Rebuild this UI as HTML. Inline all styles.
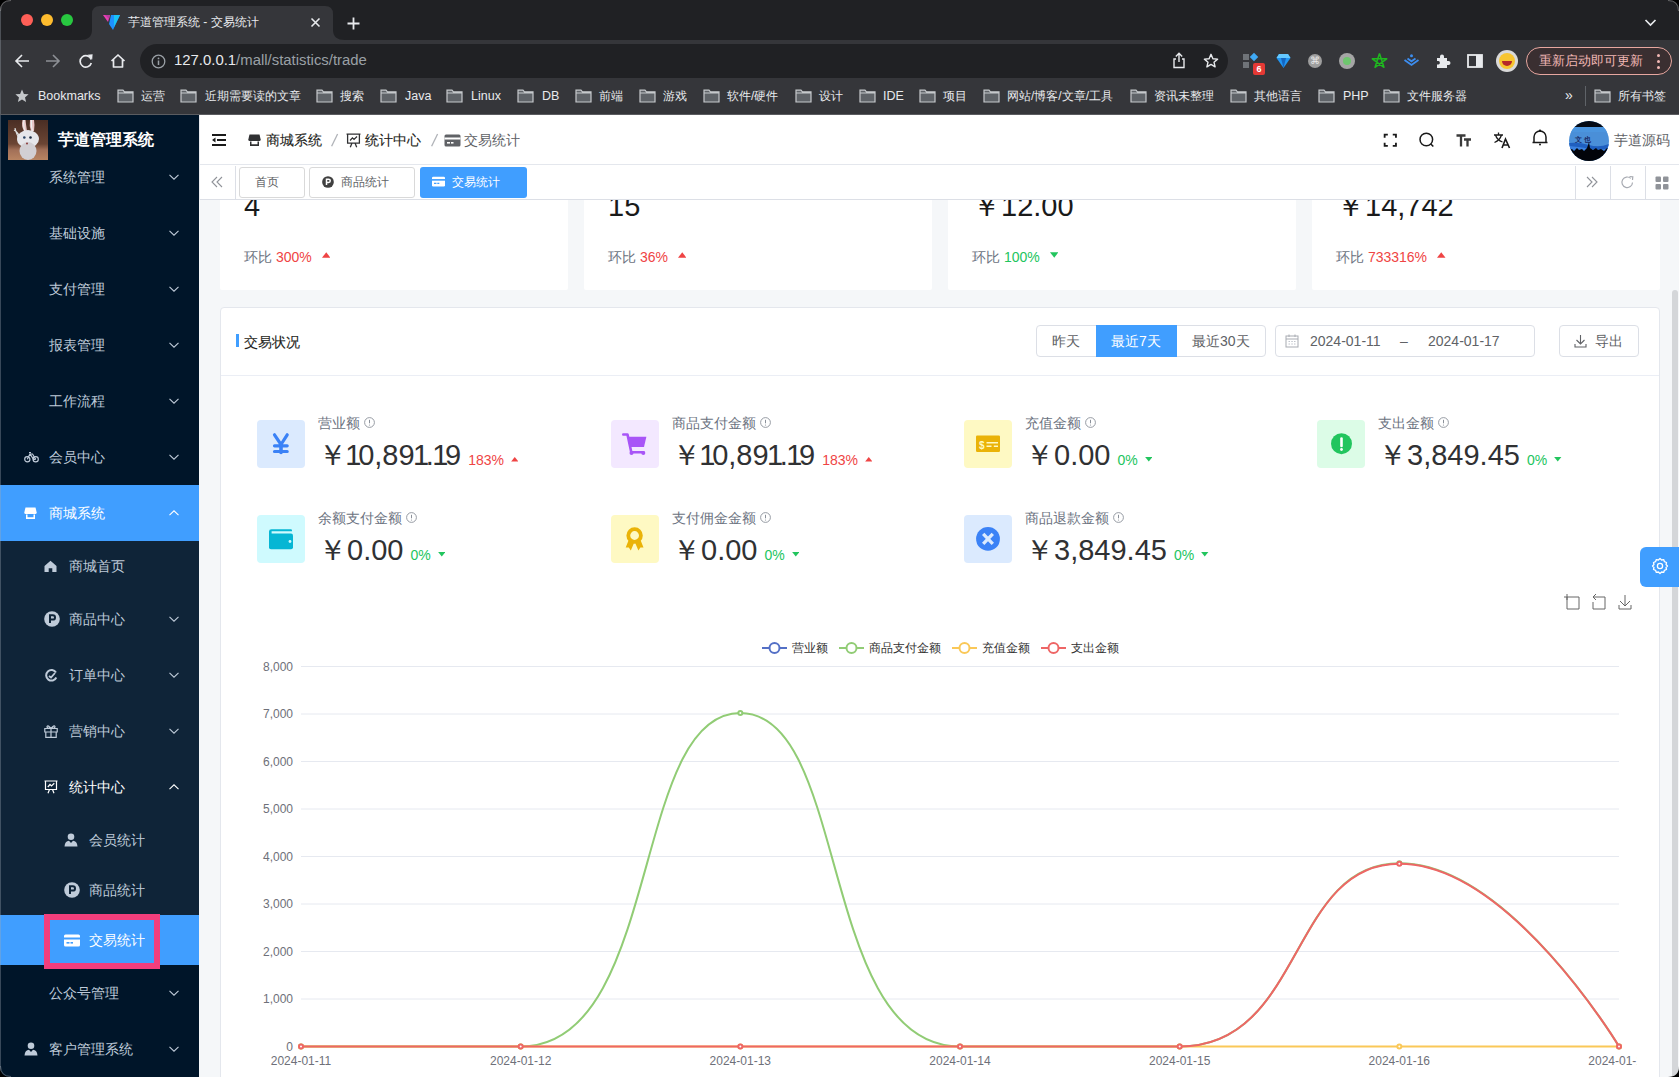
<!DOCTYPE html>
<html><head><meta charset="utf-8">
<style>
*{box-sizing:border-box;margin:0;padding:0}
html,body{width:1679px;height:1077px;overflow:hidden;background:#202124;font-family:"Liberation Sans",sans-serif}
.a{position:absolute}
.t{position:absolute;white-space:nowrap}
svg{display:block}
/* chrome */
#tabbar{left:0;top:0;width:1679px;height:40px;background:#202124}
#toolbar{left:0;top:40px;width:1679px;height:38px;background:#35363a}
#bmbar{left:0;top:78px;width:1679px;height:37px;background:#35363a}
/* app */
#side{left:0;top:115px;width:199px;height:962px;background:#001529;overflow:hidden}
#header{left:199px;top:115px;width:1480px;height:50px;background:#fff;border-bottom:1px solid #e4e7ed}
#tags{left:199px;top:165px;width:1480px;height:35px;background:#fff;border-bottom:1px solid #dcdfe6}
#content{left:199px;top:200px;width:1480px;height:877px;background:#f5f7f9;overflow:hidden}
</style></head><body>
<div id="tabbar" class="a">
  <div class="a" style="left:21px;top:13.5px;width:12px;height:12px;border-radius:50%;background:#fe5f57"></div>
  <div class="a" style="left:41px;top:13.5px;width:12px;height:12px;border-radius:50%;background:#febc2e"></div>
  <div class="a" style="left:61px;top:13.5px;width:12px;height:12px;border-radius:50%;background:#28c840"></div>
  <svg class="a" style="left:80px;top:5px" width="266" height="35" viewBox="0 0 266 35"><path d="M0 35 Q12 35 12 25 L12 9 Q12 1 20 1 L245 1 Q253 1 253 9 L253 25 Q253 35 265 35 Z" fill="#35363a"/></svg>
  <svg class="a" style="left:103px;top:14px" width="18" height="17" viewBox="0 0 18 17"><path d="M0 1 L7 1 L5 8 Z" fill="#e83fb4"/><path d="M2 1 L7 1 L6 5 Z" fill="#b93a9f"/><path d="M8 1 L17 1 L10 16 L6 10 Z" fill="#1e90ff"/><path d="M11 1 L17 1 L11 13 Z" fill="#19c3f5"/></svg>
  <div class="t" style="left:128px;top:14px;font-size:12px;line-height:16px;color:#e8eaed">芋道管理系统 - 交易统计</div>
  <svg class="a" style="left:310px;top:17px" width="11" height="11" viewBox="0 0 11 11"><path d="M1.5 1.5 L9.5 9.5 M9.5 1.5 L1.5 9.5" stroke="#e8eaed" stroke-width="1.6"/></svg>
  <svg class="a" style="left:346px;top:16px" width="15" height="15" viewBox="0 0 15 15"><path d="M7.5 1.5 V13.5 M1.5 7.5 H13.5" stroke="#e8eaed" stroke-width="1.8"/></svg>
  <svg class="a" style="left:1644px;top:17px" width="13" height="11" viewBox="0 0 13 11"><path d="M1.5 3 L6.5 8 L11.5 3" stroke="#e8eaed" stroke-width="1.7" fill="none"/></svg>
</div>
<div id="toolbar" class="a">
  <svg class="a" style="left:14px;top:13px" width="16" height="16" viewBox="0 0 16 16"><path d="M15 8 H2 M8 2 L2 8 L8 14" stroke="#e8eaed" stroke-width="1.6" fill="none"/></svg>
  <svg class="a" style="left:45px;top:13px" width="16" height="16" viewBox="0 0 16 16"><path d="M1 8 H14 M8 2 L14 8 L8 14" stroke="#8d9095" stroke-width="1.6" fill="none"/></svg>
  <svg class="a" style="left:78px;top:13px" width="16" height="16" viewBox="0 0 16 16"><path d="M13.2 6.5 A5.7 5.7 0 1 0 13.3 10" stroke="#e8eaed" stroke-width="1.7" fill="none"/><path d="M9.5 1.8 L14.6 1.3 L14.2 6.6 Z" fill="#e8eaed"/></svg>
  <svg class="a" style="left:110px;top:13px" width="16" height="16" viewBox="0 0 16 16"><path d="M1.5 8 L8 2 L14.5 8 M3.5 6.5 V14 H12.5 V6.5" stroke="#e8eaed" stroke-width="1.7" fill="none" stroke-linejoin="round"/></svg>
  <div class="a" style="left:140px;top:4px;width:1088px;height:34px;border-radius:17px;background:#202124"></div>
  <svg class="a" style="left:151px;top:14px" width="15" height="15" viewBox="0 0 15 15"><circle cx="7.5" cy="7.5" r="6.3" stroke="#9aa0a6" stroke-width="1.3" fill="none"/><path d="M7.5 6.5 V11" stroke="#9aa0a6" stroke-width="1.5"/><circle cx="7.5" cy="4.4" r="0.9" fill="#9aa0a6"/></svg>
  <div class="t" style="left:174px;top:11px;font-size:14.9px;line-height:18px;color:#e8eaed">127.0.0.1<span style="color:#9aa0a6">/mall/statistics/trade</span></div>
  <svg class="a" style="left:1171px;top:12px" width="16" height="17" viewBox="0 0 16 17"><path d="M8 1.5 V10 M4.8 4.5 L8 1.3 L11.2 4.5 M5 7 H3 V15.5 H13 V7 H11" stroke="#e8eaed" stroke-width="1.4" fill="none"/></svg>
  <svg class="a" style="left:1203px;top:13px" width="16" height="16" viewBox="0 0 16 16"><path d="M8 1.3 L9.9 5.7 L14.6 6.1 L11 9.2 L12.1 13.9 L8 11.4 L3.9 13.9 L5 9.2 L1.4 6.1 L6.1 5.7 Z" stroke="#e8eaed" stroke-width="1.4" fill="none" stroke-linejoin="round"/></svg>
  <!-- extensions -->
  <div class="a" style="left:1243px;top:14px;width:6px;height:6px;background:#6f7378"></div>
  <div class="a" style="left:1243px;top:22px;width:6px;height:6px;background:#6f7378"></div>
  <div class="a" style="left:1251px;top:14px;width:6px;height:6px;background:#3fa9f5;transform:rotate(45deg)"></div>
  <div class="a" style="left:1253px;top:23px;width:12px;height:12px;border-radius:2px;background:#e53935;color:#fff;font-size:9px;line-height:12px;text-align:center;font-weight:bold">6</div>
  <svg class="a" style="left:1276px;top:13px" width="15" height="16" viewBox="0 0 15 16"><path d="M3 1 H12 L14.5 5 L7.5 15 L0.5 5 Z" fill="#2196f3"/><path d="M3 1 H12 L14.5 5 H0.5 Z" fill="#64c8ff"/><path d="M5 5 L7.5 15 L10 5Z" fill="#1565c0"/></svg>
  <div class="a" style="left:1308px;top:14px;width:14px;height:14px;border-radius:50%;background:#9e9e9e;color:#e8e8e8;font-size:10px;line-height:14px;text-align:center">⌘</div>
  <div class="a" style="left:1339px;top:13px;width:16px;height:16px;border-radius:50%;background:#a5a5a5"></div>
  <div class="a" style="left:1343px;top:17px;width:8px;height:8px;border-radius:50%;background:#6ec66e"></div>
  <svg class="a" style="left:1371px;top:12px" width="17" height="17" viewBox="0 0 17 17"><path d="M8.50 1.60 L12.97 15.35 L1.27 6.85 L15.73 6.85 L4.03 15.35 L8.50 1.60" stroke="#1fb81f" stroke-width="1.5" fill="none" stroke-linejoin="round"/></svg>
  <svg class="a" style="left:1403px;top:13px" width="17" height="16" viewBox="0 0 17 16"><path d="M1.5 7 L8.5 12 L15.5 7 M4.5 5.5 L8.5 8.3 L12.5 5.5" stroke="#3d8ef0" stroke-width="1.8" fill="none"/><circle cx="8.5" cy="2.8" r="1.5" fill="#3d8ef0"/></svg>
  <svg class="a" style="left:1435px;top:13px" width="16" height="16" viewBox="0 0 16 16"><path d="M2 5 H5 V3.5 A2 2 0 0 1 9 3.5 V5 H12 V8 H13.5 A2 2 0 0 1 13.5 12 H12 V15 H2 V11.5 H3.5 A1.8 1.8 0 0 0 3.5 8 H2 Z" fill="#e8eaed"/></svg>
  <svg class="a" style="left:1467px;top:14px" width="16" height="14" viewBox="0 0 16 14"><rect x="1" y="1" width="14" height="12" stroke="#e8eaed" stroke-width="1.8" fill="none"/><rect x="9" y="1" width="6" height="12" fill="#e8eaed"/></svg>
  <div class="a" style="left:1496px;top:10px;width:22px;height:22px;border-radius:50%;background:#d9d9d9"></div>
  <div class="a" style="left:1499px;top:13px;width:16px;height:16px;border-radius:50%;background:#f7c531"></div>
  <div class="a" style="left:1502px;top:21px;width:10px;height:5px;border-radius:0 0 5px 5px;background:#b5282a"></div>
  <div class="a" style="left:1526px;top:7px;width:146px;height:28px;border-radius:14px;border:1.5px solid #e7a7a0;background:#3a2f31"></div>
  <div class="t" style="left:1539px;top:13px;font-size:13px;line-height:16px;color:#f2b8b5">重新启动即可更新</div>
  <div class="a" style="left:1657px;top:14px;width:3px;height:3px;border-radius:50%;background:#f2b8b5"></div>
  <div class="a" style="left:1657px;top:20px;width:3px;height:3px;border-radius:50%;background:#f2b8b5"></div>
  <div class="a" style="left:1657px;top:26px;width:3px;height:3px;border-radius:50%;background:#f2b8b5"></div>
</div>
<div id="bmbar" class="a">
<svg class="a" style="left:15px;top:11px" width="14" height="14" viewBox="0 0 14 14"><path d="M7 0.5 L8.9 4.9 L13.6 5.3 L10 8.4 L11.1 13 L7 10.6 L2.9 13 L4 8.4 L0.4 5.3 L5.1 4.9 Z" fill="#c4c7ca"/></svg>
<div class="t" style="left:38px;top:10px;font-size:12.5px;line-height:16px;color:#e8eaed">Bookmarks</div>
<svg class="a" style="left:117px;top:11px" width="17" height="14" viewBox="0 0 17 14"><path d="M1 1.2 H6 L7.5 2.8 H16 V13 H1 Z M1 4 H16" stroke="#c6c9cc" stroke-width="1.2" fill="#5f6368" /></svg>
<div class="t" style="left:141px;top:10px;font-size:12px;line-height:16px;color:#e8eaed">运营</div>
<svg class="a" style="left:180px;top:11px" width="17" height="14" viewBox="0 0 17 14"><path d="M1 1.2 H6 L7.5 2.8 H16 V13 H1 Z M1 4 H16" stroke="#c6c9cc" stroke-width="1.2" fill="#5f6368" /></svg>
<div class="t" style="left:205px;top:10px;font-size:12px;line-height:16px;color:#e8eaed">近期需要读的文章</div>
<svg class="a" style="left:316px;top:11px" width="17" height="14" viewBox="0 0 17 14"><path d="M1 1.2 H6 L7.5 2.8 H16 V13 H1 Z M1 4 H16" stroke="#c6c9cc" stroke-width="1.2" fill="#5f6368" /></svg>
<div class="t" style="left:340px;top:10px;font-size:12px;line-height:16px;color:#e8eaed">搜索</div>
<svg class="a" style="left:380px;top:11px" width="17" height="14" viewBox="0 0 17 14"><path d="M1 1.2 H6 L7.5 2.8 H16 V13 H1 Z M1 4 H16" stroke="#c6c9cc" stroke-width="1.2" fill="#5f6368" /></svg>
<div class="t" style="left:405px;top:10px;font-size:12.5px;line-height:16px;color:#e8eaed">Java</div>
<svg class="a" style="left:446px;top:11px" width="17" height="14" viewBox="0 0 17 14"><path d="M1 1.2 H6 L7.5 2.8 H16 V13 H1 Z M1 4 H16" stroke="#c6c9cc" stroke-width="1.2" fill="#5f6368" /></svg>
<div class="t" style="left:471px;top:10px;font-size:12.5px;line-height:16px;color:#e8eaed">Linux</div>
<svg class="a" style="left:517px;top:11px" width="17" height="14" viewBox="0 0 17 14"><path d="M1 1.2 H6 L7.5 2.8 H16 V13 H1 Z M1 4 H16" stroke="#c6c9cc" stroke-width="1.2" fill="#5f6368" /></svg>
<div class="t" style="left:542px;top:10px;font-size:12.5px;line-height:16px;color:#e8eaed">DB</div>
<svg class="a" style="left:575px;top:11px" width="17" height="14" viewBox="0 0 17 14"><path d="M1 1.2 H6 L7.5 2.8 H16 V13 H1 Z M1 4 H16" stroke="#c6c9cc" stroke-width="1.2" fill="#5f6368" /></svg>
<div class="t" style="left:599px;top:10px;font-size:12px;line-height:16px;color:#e8eaed">前端</div>
<svg class="a" style="left:639px;top:11px" width="17" height="14" viewBox="0 0 17 14"><path d="M1 1.2 H6 L7.5 2.8 H16 V13 H1 Z M1 4 H16" stroke="#c6c9cc" stroke-width="1.2" fill="#5f6368" /></svg>
<div class="t" style="left:663px;top:10px;font-size:12px;line-height:16px;color:#e8eaed">游戏</div>
<svg class="a" style="left:703px;top:11px" width="17" height="14" viewBox="0 0 17 14"><path d="M1 1.2 H6 L7.5 2.8 H16 V13 H1 Z M1 4 H16" stroke="#c6c9cc" stroke-width="1.2" fill="#5f6368" /></svg>
<div class="t" style="left:727px;top:10px;font-size:12px;line-height:16px;color:#e8eaed">软件/硬件</div>
<svg class="a" style="left:795px;top:11px" width="17" height="14" viewBox="0 0 17 14"><path d="M1 1.2 H6 L7.5 2.8 H16 V13 H1 Z M1 4 H16" stroke="#c6c9cc" stroke-width="1.2" fill="#5f6368" /></svg>
<div class="t" style="left:819px;top:10px;font-size:12px;line-height:16px;color:#e8eaed">设计</div>
<svg class="a" style="left:859px;top:11px" width="17" height="14" viewBox="0 0 17 14"><path d="M1 1.2 H6 L7.5 2.8 H16 V13 H1 Z M1 4 H16" stroke="#c6c9cc" stroke-width="1.2" fill="#5f6368" /></svg>
<div class="t" style="left:883px;top:10px;font-size:12.5px;line-height:16px;color:#e8eaed">IDE</div>
<svg class="a" style="left:919px;top:11px" width="17" height="14" viewBox="0 0 17 14"><path d="M1 1.2 H6 L7.5 2.8 H16 V13 H1 Z M1 4 H16" stroke="#c6c9cc" stroke-width="1.2" fill="#5f6368" /></svg>
<div class="t" style="left:943px;top:10px;font-size:12px;line-height:16px;color:#e8eaed">项目</div>
<svg class="a" style="left:983px;top:11px" width="17" height="14" viewBox="0 0 17 14"><path d="M1 1.2 H6 L7.5 2.8 H16 V13 H1 Z M1 4 H16" stroke="#c6c9cc" stroke-width="1.2" fill="#5f6368" /></svg>
<div class="t" style="left:1007px;top:10px;font-size:12px;line-height:16px;color:#e8eaed">网站/博客/文章/工具</div>
<svg class="a" style="left:1130px;top:11px" width="17" height="14" viewBox="0 0 17 14"><path d="M1 1.2 H6 L7.5 2.8 H16 V13 H1 Z M1 4 H16" stroke="#c6c9cc" stroke-width="1.2" fill="#5f6368" /></svg>
<div class="t" style="left:1154px;top:10px;font-size:12px;line-height:16px;color:#e8eaed">资讯未整理</div>
<svg class="a" style="left:1230px;top:11px" width="17" height="14" viewBox="0 0 17 14"><path d="M1 1.2 H6 L7.5 2.8 H16 V13 H1 Z M1 4 H16" stroke="#c6c9cc" stroke-width="1.2" fill="#5f6368" /></svg>
<div class="t" style="left:1254px;top:10px;font-size:12px;line-height:16px;color:#e8eaed">其他语言</div>
<svg class="a" style="left:1318px;top:11px" width="17" height="14" viewBox="0 0 17 14"><path d="M1 1.2 H6 L7.5 2.8 H16 V13 H1 Z M1 4 H16" stroke="#c6c9cc" stroke-width="1.2" fill="#5f6368" /></svg>
<div class="t" style="left:1343px;top:10px;font-size:12.5px;line-height:16px;color:#e8eaed">PHP</div>
<svg class="a" style="left:1383px;top:11px" width="17" height="14" viewBox="0 0 17 14"><path d="M1 1.2 H6 L7.5 2.8 H16 V13 H1 Z M1 4 H16" stroke="#c6c9cc" stroke-width="1.2" fill="#5f6368" /></svg>
<div class="t" style="left:1407px;top:10px;font-size:12px;line-height:16px;color:#e8eaed">文件服务器</div>
<svg class="a" style="left:1594px;top:11px" width="17" height="14" viewBox="0 0 17 14"><path d="M1 1.2 H6 L7.5 2.8 H16 V13 H1 Z M1 4 H16" stroke="#c6c9cc" stroke-width="1.2" fill="#5f6368" /></svg>
<div class="t" style="left:1618px;top:10px;font-size:12px;line-height:16px;color:#e8eaed">所有书签</div>
<div class="t" style="left:1565px;top:9px;font-size:14px;line-height:16px;color:#e8eaed">»</div>
<div class="a" style="left:1585px;top:8px;width:1px;height:20px;background:#5f6368"></div>
</div>

<div id="side" class="a"></div>
<div id="bmline" class="a" style="left:0;top:114px;width:1679px;height:1px;background:#5b5c60;z-index:1"></div>
<!--SIDE-->
<div class="t" style="left:49px;top:167px;font-size:14px;line-height:20px;color:#bfcbd9">系统管理</div>
<svg class="a" style="left:168px;top:173px" width="12" height="8" viewBox="0 0 12 8"><path d="M1.5 1.8 L6 6.2 L10.5 1.8" stroke="#bfcbd9" stroke-width="1.1" fill="none"/></svg>
<div class="t" style="left:49px;top:223px;font-size:14px;line-height:20px;color:#bfcbd9">基础设施</div>
<svg class="a" style="left:168px;top:229px" width="12" height="8" viewBox="0 0 12 8"><path d="M1.5 1.8 L6 6.2 L10.5 1.8" stroke="#bfcbd9" stroke-width="1.1" fill="none"/></svg>
<div class="t" style="left:49px;top:279px;font-size:14px;line-height:20px;color:#bfcbd9">支付管理</div>
<svg class="a" style="left:168px;top:285px" width="12" height="8" viewBox="0 0 12 8"><path d="M1.5 1.8 L6 6.2 L10.5 1.8" stroke="#bfcbd9" stroke-width="1.1" fill="none"/></svg>
<div class="t" style="left:49px;top:335px;font-size:14px;line-height:20px;color:#bfcbd9">报表管理</div>
<svg class="a" style="left:168px;top:341px" width="12" height="8" viewBox="0 0 12 8"><path d="M1.5 1.8 L6 6.2 L10.5 1.8" stroke="#bfcbd9" stroke-width="1.1" fill="none"/></svg>
<div class="t" style="left:49px;top:391px;font-size:14px;line-height:20px;color:#bfcbd9">工作流程</div>
<svg class="a" style="left:168px;top:397px" width="12" height="8" viewBox="0 0 12 8"><path d="M1.5 1.8 L6 6.2 L10.5 1.8" stroke="#bfcbd9" stroke-width="1.1" fill="none"/></svg>
<svg class="a" style="left:24px;top:451px" width="15" height="12" viewBox="0 0 15 12"><circle cx="3.3" cy="8.3" r="2.6" stroke="#bfcbd9" stroke-width="1.2" fill="none"/><circle cx="11.7" cy="8.3" r="2.6" stroke="#bfcbd9" stroke-width="1.2" fill="none"/><path d="M3.3 8.3 L6 3 L9.5 8.3 L11.7 8.3 M6 3 H8.5 L11.7 8.3 M5 1.5 H7" stroke="#bfcbd9" stroke-width="1.2" fill="none"/></svg>
<div class="t" style="left:49px;top:447px;font-size:14px;line-height:20px;color:#bfcbd9">会员中心</div>
<svg class="a" style="left:168px;top:453px" width="12" height="8" viewBox="0 0 12 8"><path d="M1.5 1.8 L6 6.2 L10.5 1.8" stroke="#bfcbd9" stroke-width="1.1" fill="none"/></svg>
<div class="a" style="left:0;top:485px;width:199px;height:56px;background:#409eff"></div>
<svg class="a" style="left:24px;top:507px" width="13" height="13" viewBox="0 0 13 13"><path d="M1.5 0.5 H11.5 L12.7 5.5 Q12.7 7 11.3 7 H1.7 Q0.3 7 0.3 5.5 Z" fill="#fff"/><path d="M2 7.5 V12 H11 V7.5 H9.5 V10.3 H3.5 V7.5 Z" fill="#fff"/></svg>
<div class="t" style="left:49px;top:503px;font-size:14px;line-height:20px;color:#fff">商城系统</div>
<svg class="a" style="left:168px;top:509px" width="12" height="8" viewBox="0 0 12 8"><path d="M1.5 6.2 L6 1.8 L10.5 6.2" stroke="#fff" stroke-width="1.1" fill="none"/></svg>
<div class="a" style="left:0;top:541px;width:199px;height:50px;background:#0f2438"></div>
<svg class="a" style="left:44px;top:560px" width="13" height="13" viewBox="0 0 13 13"><path d="M6.5 0.8 L12.5 6 V12 H8.3 V8.3 H4.7 V12 H0.5 V6 Z" fill="#bfcbd9"/></svg>
<div class="t" style="left:69px;top:556px;font-size:14px;line-height:20px;color:#bfcbd9">商城首页</div>
<div class="a" style="left:0;top:591px;width:199px;height:56px;background:#0f2438"></div>
<svg class="a" style="left:44px;top:611px" width="16" height="16" viewBox="0 0 16 16"><circle cx="8" cy="8" r="7.8" fill="#bfcbd9"/><path d="M6 12 V4.2 H8.8 Q11 4.2 11 6.4 Q11 8.6 8.8 8.6 H6" stroke="#0f2438" stroke-width="2" fill="none"/></svg>
<div class="t" style="left:69px;top:609px;font-size:14px;line-height:20px;color:#bfcbd9">商品中心</div>
<svg class="a" style="left:168px;top:615px" width="12" height="8" viewBox="0 0 12 8"><path d="M1.5 1.8 L6 6.2 L10.5 1.8" stroke="#bfcbd9" stroke-width="1.1" fill="none"/></svg>
<div class="a" style="left:0;top:647px;width:199px;height:56px;background:#0f2438"></div>
<svg class="a" style="left:44px;top:668px" width="14" height="14" viewBox="0 0 14 14"><path d="M12 4.5 A5.3 5.3 0 1 0 12.3 9.5" stroke="#bfcbd9" stroke-width="2" fill="none"/><path d="M5 8 L7 9.5 L11 5" stroke="#bfcbd9" stroke-width="1.8" fill="none"/></svg>
<div class="t" style="left:69px;top:665px;font-size:14px;line-height:20px;color:#bfcbd9">订单中心</div>
<svg class="a" style="left:168px;top:671px" width="12" height="8" viewBox="0 0 12 8"><path d="M1.5 1.8 L6 6.2 L10.5 1.8" stroke="#bfcbd9" stroke-width="1.1" fill="none"/></svg>
<div class="a" style="left:0;top:703px;width:199px;height:56px;background:#0f2438"></div>
<svg class="a" style="left:44px;top:724px" width="14" height="14" viewBox="0 0 14 14"><path d="M0.8 4.5 H13.2 V8 H0.8 Z M1.8 8 V13.3 H12.2 V8 M7 4.5 V13.3 M7 4.5 Q4 0.8 3 2.5 Q2.8 4.5 7 4.5 Q11.2 4.5 11 2.5 Q10 0.8 7 4.5" stroke="#bfcbd9" stroke-width="1.2" fill="none"/></svg>
<div class="t" style="left:69px;top:721px;font-size:14px;line-height:20px;color:#bfcbd9">营销中心</div>
<svg class="a" style="left:168px;top:727px" width="12" height="8" viewBox="0 0 12 8"><path d="M1.5 1.8 L6 6.2 L10.5 1.8" stroke="#bfcbd9" stroke-width="1.1" fill="none"/></svg>
<div class="a" style="left:0;top:759px;width:199px;height:56px;background:#0f2438"></div>
<svg class="a" style="left:44px;top:780px" width="14" height="14" viewBox="0 0 14 14"><path d="M0.5 1 H13.5 M1.5 1 V9.5 H12.5 V1 M4 13.3 L5.5 9.5 M10 13.3 L8.5 9.5 M3.8 7 L6 4.5 L7.5 6 L10.3 3.3" stroke="#fff" stroke-width="1.2" fill="none"/></svg>
<div class="t" style="left:69px;top:777px;font-size:14px;line-height:20px;color:#fff">统计中心</div>
<svg class="a" style="left:168px;top:783px" width="12" height="8" viewBox="0 0 12 8"><path d="M1.5 6.2 L6 1.8 L10.5 6.2" stroke="#fff" stroke-width="1.1" fill="none"/></svg>
<div class="a" style="left:0;top:815px;width:199px;height:50px;background:#0f2438"></div>
<svg class="a" style="left:64px;top:833px" width="14" height="14" viewBox="0 0 14 14"><circle cx="7" cy="3.8" r="3.3" fill="#bfcbd9"/><path d="M0.5 13.5 Q1 8 5 7.8 L7 10 L9 7.8 Q13 8 13.5 13.5 Z" fill="#bfcbd9"/></svg>
<div class="t" style="left:89px;top:830px;font-size:14px;line-height:20px;color:#bfcbd9">会员统计</div>
<div class="a" style="left:0;top:865px;width:199px;height:50px;background:#0f2438"></div>
<svg class="a" style="left:64px;top:882px" width="16" height="16" viewBox="0 0 16 16"><circle cx="8" cy="8" r="7.8" fill="#bfcbd9"/><path d="M6 12 V4.2 H8.8 Q11 4.2 11 6.4 Q11 8.6 8.8 8.6 H6" stroke="#0f2438" stroke-width="2" fill="none"/></svg>
<div class="t" style="left:89px;top:880px;font-size:14px;line-height:20px;color:#bfcbd9">商品统计</div>
<div class="a" style="left:0;top:915px;width:199px;height:50px;background:#409eff"></div>
<svg class="a" style="left:64px;top:934px" width="16" height="13" viewBox="0 0 16 13"><rect x="0" y="0.5" width="16" height="12" rx="1.5" fill="#fff"/><rect x="0" y="3.5" width="16" height="2" fill="#409eff"/><rect x="2.5" y="8" width="3" height="1.6" fill="#409eff"/><rect x="6.5" y="8" width="2.5" height="1.6" fill="#409eff"/></svg>
<div class="t" style="left:89px;top:930px;font-size:14px;line-height:20px;color:#fff">交易统计</div>
<div class="t" style="left:49px;top:983px;font-size:14px;line-height:20px;color:#bfcbd9">公众号管理</div>
<svg class="a" style="left:168px;top:989px" width="12" height="8" viewBox="0 0 12 8"><path d="M1.5 1.8 L6 6.2 L10.5 1.8" stroke="#bfcbd9" stroke-width="1.1" fill="none"/></svg>
<svg class="a" style="left:24px;top:1042px" width="14" height="14" viewBox="0 0 14 14"><circle cx="7" cy="3.8" r="3.3" fill="#bfcbd9"/><path d="M0.5 13.5 Q1 8 5 7.8 L7 10 L9 7.8 Q13 8 13.5 13.5 Z" fill="#bfcbd9"/></svg>
<div class="t" style="left:49px;top:1039px;font-size:14px;line-height:20px;color:#bfcbd9">客户管理系统</div>
<svg class="a" style="left:168px;top:1045px" width="12" height="8" viewBox="0 0 12 8"><path d="M1.5 1.8 L6 6.2 L10.5 1.8" stroke="#bfcbd9" stroke-width="1.1" fill="none"/></svg>
<div class="a" style="left:0;top:115px;width:199px;height:50px;background:#001529"></div>
<svg class="a" style="left:8px;top:120px" width="40" height="40" viewBox="0 0 40 40"><defs><linearGradient id="lg1" x1="0" y1="0" x2="0" y2="1"><stop offset="0" stop-color="#4a2e24"/><stop offset="0.6" stop-color="#6b4534"/><stop offset="0.75" stop-color="#a27058"/><stop offset="1" stop-color="#b88462"/></linearGradient></defs><rect width="40" height="40" fill="url(#lg1)"/><path d="M12 21 Q8 13 7 8 M13 19 Q10 12 6 10" stroke="#ddd" stroke-width="1.2" fill="none"/><path d="M14.5 0 Q13 6 16 11 L19 11 Q18 5 17.5 0 Z M22 0 Q21 6 23 11 L26 11 Q27 5 26 0 Z" fill="#e8c4c4"/><path d="M16 0 Q15 6 17 11 M23.5 0 Q23 6 24.5 11" stroke="#eee" stroke-width="1.2" fill="none"/><ellipse cx="20" cy="19" rx="11" ry="9" fill="#e6e6ea"/><ellipse cx="20" cy="31" rx="8.5" ry="9" fill="#d2cfd3"/><circle cx="16.3" cy="17.5" r="1.3" fill="#2a4466"/><circle cx="22.5" cy="17.5" r="1.3" fill="#1b2a40"/><circle cx="19" cy="23.5" r="1" fill="#8b3a3a"/></svg>
<div class="t" style="left:58px;top:130px;font-size:16px;line-height:20px;color:#fff;font-weight:bold">芋道管理系统</div>
<div class="a" style="left:44px;top:914px;width:116px;height:55px;border:6px solid #f23e7c"></div>
<!--/SIDE-->
<div id="content" class="a"></div>
<!--CONTENT-->
<div class="a" style="left:220px;top:120px;width:348px;height:170px;background:#fff;border-radius:2px"></div>
<div class="a" style="left:584px;top:120px;width:348px;height:170px;background:#fff;border-radius:2px"></div>
<div class="a" style="left:948px;top:120px;width:348px;height:170px;background:#fff;border-radius:2px"></div>
<div class="a" style="left:1312px;top:120px;width:348px;height:170px;background:#fff;border-radius:2px"></div>
<div class="t" style="left:244px;top:188px;font-size:29px;line-height:36px;color:#1a1a1a">4</div>
<div class="t" style="left:608px;top:188px;font-size:29px;line-height:36px;color:#1a1a1a">15</div>
<div class="t" style="left:972px;top:188px;font-size:29px;line-height:36px;color:#1a1a1a">￥12.00</div>
<div class="t" style="left:1336px;top:188px;font-size:29px;line-height:36px;color:#1a1a1a">￥14,742</div>
<div class="t" style="left:244px;top:247px;font-size:14px;line-height:20px;color:#6b7280">环比 <span style="color:#ef4444">300%</span><svg style="display:inline-block;vertical-align:middle;margin-left:10px;position:relative;top:-3px" width="8.5" height="6" viewBox="0 0 9 6"><path d="M0 6 L4.5 0 L9 6Z" fill="#ef4444"/></svg></div>
<div class="t" style="left:608px;top:247px;font-size:14px;line-height:20px;color:#6b7280">环比 <span style="color:#ef4444">36%</span><svg style="display:inline-block;vertical-align:middle;margin-left:10px;position:relative;top:-3px" width="8.5" height="6" viewBox="0 0 9 6"><path d="M0 6 L4.5 0 L9 6Z" fill="#ef4444"/></svg></div>
<div class="t" style="left:972px;top:247px;font-size:14px;line-height:20px;color:#6b7280">环比 <span style="color:#22c55e">100%</span><svg style="display:inline-block;vertical-align:middle;margin-left:10px;position:relative;top:-3px" width="8.5" height="6" viewBox="0 0 9 6"><path d="M0 0 L4.5 6 L9 0Z" fill="#22c55e"/></svg></div>
<div class="t" style="left:1336px;top:247px;font-size:14px;line-height:20px;color:#6b7280">环比 <span style="color:#ef4444">733316%</span><svg style="display:inline-block;vertical-align:middle;margin-left:10px;position:relative;top:-3px" width="8.5" height="6" viewBox="0 0 9 6"><path d="M0 6 L4.5 0 L9 6Z" fill="#ef4444"/></svg></div>
<div class="a" style="left:220px;top:307px;width:1440px;height:800px;background:#fff;border:1px solid #e4e7ed;border-radius:4px"></div>
<div class="a" style="left:221px;top:375px;width:1438px;height:1px;background:#ebeef5"></div>
<div class="a" style="left:236px;top:334px;width:3px;height:13px;background:#409eff"></div>
<div class="t" style="left:244px;top:332px;font-size:14px;line-height:20px;color:#1d1e20;font-weight:500;-webkit-text-stroke:0.1px #1d1e20">交易状况</div>
<div class="a" style="left:1036px;top:325px;width:230px;height:32px;border:1px solid #dcdfe6;border-radius:4px;background:#fff"></div>
<div class="a" style="left:1096px;top:325px;width:81px;height:32px;background:#409eff"></div>
<div class="t" style="left:1052px;top:331px;font-size:14px;line-height:20px;color:#606266">昨天</div>
<div class="t" style="left:1111px;top:331px;font-size:14px;line-height:20px;color:#fff">最近7天</div>
<div class="t" style="left:1192px;top:331px;font-size:14px;line-height:20px;color:#606266">最近30天</div>
<div class="a" style="left:1275px;top:325px;width:260px;height:32px;border:1px solid #dcdfe6;border-radius:4px;background:#fff"></div>
<svg class="a" style="left:1285px;top:334px" width="14" height="14" viewBox="0 0 14 14"><rect x="1" y="2" width="12" height="11" stroke="#a8abb2" stroke-width="1" fill="none"/><path d="M1 5 H13 M4 0.5 V3 M10 0.5 V3" stroke="#a8abb2" stroke-width="1"/><path d="M3.5 7.5 H5 M6.3 7.5 H7.8 M9 7.5 H10.5 M3.5 10 H5 M6.3 10 H7.8 M9 10 H10.5" stroke="#c0c4cc" stroke-width="1"/></svg>
<div class="t" style="left:1310px;top:331px;font-size:14px;line-height:20px;color:#606266">2024-01-11</div>
<div class="t" style="left:1400px;top:331px;font-size:14px;line-height:20px;color:#606266">–</div>
<div class="t" style="left:1428px;top:331px;font-size:14px;line-height:20px;color:#606266">2024-01-17</div>
<div class="a" style="left:1559px;top:325px;width:80px;height:32px;border:1px solid #dcdfe6;border-radius:4px;background:#fff"></div>
<svg class="a" style="left:1574px;top:334px" width="13" height="14" viewBox="0 0 13 14"><path d="M6.5 1 V10 M2.5 6 L6.5 10 L10.5 6 M1 10 V13 H12 V10" stroke="#606266" stroke-width="1.1" fill="none"/></svg>
<div class="t" style="left:1595px;top:331px;font-size:14px;line-height:20px;color:#606266">导出</div>
<div class="a" style="left:257px;top:420px;width:48px;height:48px;border-radius:4px;background:#dbeafe"></div>
<svg class="a" style="left:257px;top:420px" width="48" height="48" viewBox="0 0 48 48"><path d="M17.5 14.8 L24 24.5 L30.2 14.8 M17.5 25.8 H30.2 M17.5 31.5 H30.2" stroke="#3b82f6" stroke-width="3.2" fill="none" stroke-linecap="round" stroke-linejoin="round"/><path d="M24 24 V32.5" stroke="#3b82f6" stroke-width="3.6" stroke-linecap="round"/></svg>
<div class="t" style="left:318px;top:413px;font-size:14px;line-height:20px;color:#6b7280">营业额<svg style="display:inline-block;vertical-align:middle;margin-left:4px;margin-top:-3px" width="11" height="11" viewBox="0 0 11 11"><circle cx="5.5" cy="5.5" r="4.9" stroke="#8b919a" stroke-width="0.9" fill="none"/><path d="M5.5 2.8 V6.3" stroke="#8b919a" stroke-width="1"/><circle cx="5.5" cy="8" r="0.6" fill="#8b919a"/></svg></div>
<div class="t" style="left:318px;top:437px;font-size:29px;line-height:36px;color:#303133;">￥<span style="margin-left:-1.7px;margin-right:-3.3px">1</span>0,89<span style="margin-left:-1.7px;margin-right:-3.3px">1</span>.<span style="margin-left:-1.7px;margin-right:-3.3px">1</span>9<span style="font-size:14px;color:#ef4444;margin-left:7px;letter-spacing:0">183%</span><svg style="display:inline-block;vertical-align:middle;margin-left:7px;position:relative;top:2px" width="7.5" height="4.5" viewBox="0 0 8 5"><path d="M0 5 L4 0 L8 5Z" fill="#ef4444"/></svg></div>
<div class="a" style="left:611px;top:420px;width:48px;height:48px;border-radius:4px;background:#f3e8ff"></div>
<svg class="a" style="left:611px;top:420px" width="48" height="48" viewBox="0 0 48 48"><path d="M12.3 14.5 H16.5 L20.3 32.3 H32.5" stroke="#a855f7" stroke-width="2.6" fill="none" stroke-linecap="round" stroke-linejoin="round"/><path d="M17 16.8 H35.4 L33 27 H19 Z" fill="#a855f7"/><circle cx="20.5" cy="33" r="2" fill="#a855f7"/><circle cx="32.3" cy="33" r="2" fill="#a855f7"/></svg>
<div class="t" style="left:672px;top:413px;font-size:14px;line-height:20px;color:#6b7280">商品支付金额<svg style="display:inline-block;vertical-align:middle;margin-left:4px;margin-top:-3px" width="11" height="11" viewBox="0 0 11 11"><circle cx="5.5" cy="5.5" r="4.9" stroke="#8b919a" stroke-width="0.9" fill="none"/><path d="M5.5 2.8 V6.3" stroke="#8b919a" stroke-width="1"/><circle cx="5.5" cy="8" r="0.6" fill="#8b919a"/></svg></div>
<div class="t" style="left:672px;top:437px;font-size:29px;line-height:36px;color:#303133;">￥<span style="margin-left:-1.7px;margin-right:-3.3px">1</span>0,89<span style="margin-left:-1.7px;margin-right:-3.3px">1</span>.<span style="margin-left:-1.7px;margin-right:-3.3px">1</span>9<span style="font-size:14px;color:#ef4444;margin-left:7px;letter-spacing:0">183%</span><svg style="display:inline-block;vertical-align:middle;margin-left:7px;position:relative;top:2px" width="7.5" height="4.5" viewBox="0 0 8 5"><path d="M0 5 L4 0 L8 5Z" fill="#ef4444"/></svg></div>
<div class="a" style="left:964px;top:420px;width:48px;height:48px;border-radius:4px;background:#fef9c3"></div>
<svg class="a" style="left:964px;top:420px" width="48" height="48" viewBox="0 0 48 48"><rect x="12" y="15.4" width="24" height="16.6" rx="1.2" fill="#eab308"/><text x="15" y="28.5" font-size="10" fill="#fef9c3" font-family="Liberation Sans" font-weight="bold">$</text><path d="M22.5 22.8 H34 M22.5 26.2 H27.5 M29.8 26.2 H34" stroke="#fef9c3" stroke-width="1.5"/></svg>
<div class="t" style="left:1025px;top:413px;font-size:14px;line-height:20px;color:#6b7280">充值金额<svg style="display:inline-block;vertical-align:middle;margin-left:4px;margin-top:-3px" width="11" height="11" viewBox="0 0 11 11"><circle cx="5.5" cy="5.5" r="4.9" stroke="#8b919a" stroke-width="0.9" fill="none"/><path d="M5.5 2.8 V6.3" stroke="#8b919a" stroke-width="1"/><circle cx="5.5" cy="8" r="0.6" fill="#8b919a"/></svg></div>
<div class="t" style="left:1025px;top:437px;font-size:29px;line-height:36px;color:#303133;">￥0.00<span style="font-size:14px;color:#22c55e;margin-left:7px;letter-spacing:0">0%</span><svg style="display:inline-block;vertical-align:middle;margin-left:7px;position:relative;top:2px" width="7.5" height="4.5" viewBox="0 0 8 5"><path d="M0 0 L4 5 L8 0Z" fill="#22c55e"/></svg></div>
<div class="a" style="left:1317px;top:420px;width:48px;height:48px;border-radius:4px;background:#dcfce7"></div>
<svg class="a" style="left:1317px;top:420px" width="48" height="48" viewBox="0 0 48 48"><circle cx="24.5" cy="23.7" r="10.5" fill="#22c55e"/><path d="M24.5 18.5 V26" stroke="#fff" stroke-width="2.6" stroke-linecap="round"/><circle cx="24.5" cy="29.5" r="1.4" fill="#fff"/></svg>
<div class="t" style="left:1378px;top:413px;font-size:14px;line-height:20px;color:#6b7280">支出金额<svg style="display:inline-block;vertical-align:middle;margin-left:4px;margin-top:-3px" width="11" height="11" viewBox="0 0 11 11"><circle cx="5.5" cy="5.5" r="4.9" stroke="#8b919a" stroke-width="0.9" fill="none"/><path d="M5.5 2.8 V6.3" stroke="#8b919a" stroke-width="1"/><circle cx="5.5" cy="8" r="0.6" fill="#8b919a"/></svg></div>
<div class="t" style="left:1378px;top:437px;font-size:29px;line-height:36px;color:#303133;">￥3,849.45<span style="font-size:14px;color:#22c55e;margin-left:7px;letter-spacing:0">0%</span><svg style="display:inline-block;vertical-align:middle;margin-left:7px;position:relative;top:2px" width="7.5" height="4.5" viewBox="0 0 8 5"><path d="M0 0 L4 5 L8 0Z" fill="#22c55e"/></svg></div>
<div class="a" style="left:257px;top:515px;width:48px;height:48px;border-radius:4px;background:#cffafe"></div>
<svg class="a" style="left:257px;top:515px" width="48" height="48" viewBox="0 0 48 48"><path d="M14.5 14.2 H33.8 Q35 14.2 35 15.5 L35 16.2 H14.6 V34 Q12 34 12 31 V16.5 Q12 14.2 14.5 14.2 Z" fill="#06b6d4"/><rect x="12" y="18.5" width="24" height="15.7" rx="2" fill="#06b6d4"/><circle cx="33" cy="26.5" r="1.4" fill="#cffafe"/></svg>
<div class="t" style="left:318px;top:508px;font-size:14px;line-height:20px;color:#6b7280">余额支付金额<svg style="display:inline-block;vertical-align:middle;margin-left:4px;margin-top:-3px" width="11" height="11" viewBox="0 0 11 11"><circle cx="5.5" cy="5.5" r="4.9" stroke="#8b919a" stroke-width="0.9" fill="none"/><path d="M5.5 2.8 V6.3" stroke="#8b919a" stroke-width="1"/><circle cx="5.5" cy="8" r="0.6" fill="#8b919a"/></svg></div>
<div class="t" style="left:318px;top:532px;font-size:29px;line-height:36px;color:#303133;">￥0.00<span style="font-size:14px;color:#22c55e;margin-left:7px;letter-spacing:0">0%</span><svg style="display:inline-block;vertical-align:middle;margin-left:7px;position:relative;top:2px" width="7.5" height="4.5" viewBox="0 0 8 5"><path d="M0 0 L4 5 L8 0Z" fill="#22c55e"/></svg></div>
<div class="a" style="left:611px;top:515px;width:48px;height:48px;border-radius:4px;background:#fef9c3"></div>
<svg class="a" style="left:611px;top:515px" width="48" height="48" viewBox="0 0 48 48"><circle cx="23.6" cy="20.5" r="6.3" stroke="#eab308" stroke-width="3.8" fill="none"/><path d="M17.5 25.5 L14.7 32.5 L17.8 32.5 L19.8 35.5 L23 28 Z M29.7 25.5 L32.5 32.5 L29.4 32.5 L27.4 35.5 L24.2 28 Z" fill="#eab308"/></svg>
<div class="t" style="left:672px;top:508px;font-size:14px;line-height:20px;color:#6b7280">支付佣金金额<svg style="display:inline-block;vertical-align:middle;margin-left:4px;margin-top:-3px" width="11" height="11" viewBox="0 0 11 11"><circle cx="5.5" cy="5.5" r="4.9" stroke="#8b919a" stroke-width="0.9" fill="none"/><path d="M5.5 2.8 V6.3" stroke="#8b919a" stroke-width="1"/><circle cx="5.5" cy="8" r="0.6" fill="#8b919a"/></svg></div>
<div class="t" style="left:672px;top:532px;font-size:29px;line-height:36px;color:#303133;">￥0.00<span style="font-size:14px;color:#22c55e;margin-left:7px;letter-spacing:0">0%</span><svg style="display:inline-block;vertical-align:middle;margin-left:7px;position:relative;top:2px" width="7.5" height="4.5" viewBox="0 0 8 5"><path d="M0 0 L4 5 L8 0Z" fill="#22c55e"/></svg></div>
<div class="a" style="left:964px;top:515px;width:48px;height:48px;border-radius:4px;background:#dbeafe"></div>
<svg class="a" style="left:964px;top:515px" width="48" height="48" viewBox="0 0 48 48"><circle cx="24" cy="23.9" r="11.9" fill="#3b82f6"/><path d="M19.2 18.9 L28.8 28.9 M28.8 18.9 L19.2 28.9" stroke="#dbeafe" stroke-width="3.3"/></svg>
<div class="t" style="left:1025px;top:508px;font-size:14px;line-height:20px;color:#6b7280">商品退款金额<svg style="display:inline-block;vertical-align:middle;margin-left:4px;margin-top:-3px" width="11" height="11" viewBox="0 0 11 11"><circle cx="5.5" cy="5.5" r="4.9" stroke="#8b919a" stroke-width="0.9" fill="none"/><path d="M5.5 2.8 V6.3" stroke="#8b919a" stroke-width="1"/><circle cx="5.5" cy="8" r="0.6" fill="#8b919a"/></svg></div>
<div class="t" style="left:1025px;top:532px;font-size:29px;line-height:36px;color:#303133;">￥3,849.45<span style="font-size:14px;color:#22c55e;margin-left:7px;letter-spacing:0">0%</span><svg style="display:inline-block;vertical-align:middle;margin-left:7px;position:relative;top:2px" width="7.5" height="4.5" viewBox="0 0 8 5"><path d="M0 0 L4 5 L8 0Z" fill="#22c55e"/></svg></div>
<svg class="a" style="left:1563px;top:592px" width="72" height="20" viewBox="0 0 72 20"><path d="M4 5 V17 H16 V5 H7 M4 2 V8 M1 5 H7" stroke="#666" stroke-width="1" fill="none"/><path d="M31 5 H42 V17 H30 V10 M33 2 L30 5 L33 8" stroke="#666" stroke-width="1" fill="none"/><path d="M62 3 V14 M57 9 L62 14 L67 9 M56 13 V17 H68 V13" stroke="#666" stroke-width="1" fill="none"/></svg>
<svg class="a" style="left:762px;top:640px" width="25" height="16" viewBox="0 0 25 16"><path d="M0 8 H7.5 M17.5 8 H25" stroke="#5470c6" stroke-width="2"/><circle cx="12.5" cy="8" r="5" stroke="#5470c6" stroke-width="2" fill="#fff"/></svg>
<div class="t" style="left:792px;top:640px;font-size:12px;line-height:16px;color:#333">营业额</div>
<svg class="a" style="left:839px;top:640px" width="25" height="16" viewBox="0 0 25 16"><path d="M0 8 H7.5 M17.5 8 H25" stroke="#91cc75" stroke-width="2"/><circle cx="12.5" cy="8" r="5" stroke="#91cc75" stroke-width="2" fill="#fff"/></svg>
<div class="t" style="left:869px;top:640px;font-size:12px;line-height:16px;color:#333">商品支付金额</div>
<svg class="a" style="left:952px;top:640px" width="25" height="16" viewBox="0 0 25 16"><path d="M0 8 H7.5 M17.5 8 H25" stroke="#fac858" stroke-width="2"/><circle cx="12.5" cy="8" r="5" stroke="#fac858" stroke-width="2" fill="#fff"/></svg>
<div class="t" style="left:982px;top:640px;font-size:12px;line-height:16px;color:#333">充值金额</div>
<svg class="a" style="left:1041px;top:640px" width="25" height="16" viewBox="0 0 25 16"><path d="M0 8 H7.5 M17.5 8 H25" stroke="#ee6666" stroke-width="2"/><circle cx="12.5" cy="8" r="5" stroke="#ee6666" stroke-width="2" fill="#fff"/></svg>
<div class="t" style="left:1071px;top:640px;font-size:12px;line-height:16px;color:#333">支出金额</div>
<div class="a" style="left:0;top:0;width:1637px;height:1077px;overflow:hidden"><svg class="a" style="left:0;top:0" width="1679" height="1077" viewBox="0 0 1679 1077">
<line x1="301" y1="666.5" x2="1619" y2="666.5" stroke="#e6e9f0" stroke-width="1"/>
<line x1="301" y1="714.0" x2="1619" y2="714.0" stroke="#e6e9f0" stroke-width="1"/>
<line x1="301" y1="761.5" x2="1619" y2="761.5" stroke="#e6e9f0" stroke-width="1"/>
<line x1="301" y1="809.0" x2="1619" y2="809.0" stroke="#e6e9f0" stroke-width="1"/>
<line x1="301" y1="856.5" x2="1619" y2="856.5" stroke="#e6e9f0" stroke-width="1"/>
<line x1="301" y1="904.0" x2="1619" y2="904.0" stroke="#e6e9f0" stroke-width="1"/>
<line x1="301" y1="951.5" x2="1619" y2="951.5" stroke="#e6e9f0" stroke-width="1"/>
<line x1="301" y1="999.0" x2="1619" y2="999.0" stroke="#e6e9f0" stroke-width="1"/>
<text x="293" y="666.5" text-anchor="end" font-size="12" fill="#6e7079" font-family="Liberation Sans" dominant-baseline="central">8,000</text>
<text x="293" y="714.0" text-anchor="end" font-size="12" fill="#6e7079" font-family="Liberation Sans" dominant-baseline="central">7,000</text>
<text x="293" y="761.5" text-anchor="end" font-size="12" fill="#6e7079" font-family="Liberation Sans" dominant-baseline="central">6,000</text>
<text x="293" y="809.0" text-anchor="end" font-size="12" fill="#6e7079" font-family="Liberation Sans" dominant-baseline="central">5,000</text>
<text x="293" y="856.5" text-anchor="end" font-size="12" fill="#6e7079" font-family="Liberation Sans" dominant-baseline="central">4,000</text>
<text x="293" y="904.0" text-anchor="end" font-size="12" fill="#6e7079" font-family="Liberation Sans" dominant-baseline="central">3,000</text>
<text x="293" y="951.5" text-anchor="end" font-size="12" fill="#6e7079" font-family="Liberation Sans" dominant-baseline="central">2,000</text>
<text x="293" y="999.0" text-anchor="end" font-size="12" fill="#6e7079" font-family="Liberation Sans" dominant-baseline="central">1,000</text>
<text x="293" y="1046.5" text-anchor="end" font-size="12" fill="#6e7079" font-family="Liberation Sans" dominant-baseline="central">0</text>
<text x="301.0" y="1060.5" text-anchor="middle" font-size="12" fill="#6e7079" font-family="Liberation Sans" dominant-baseline="central">2024-01-11</text>
<text x="520.7" y="1060.5" text-anchor="middle" font-size="12" fill="#6e7079" font-family="Liberation Sans" dominant-baseline="central">2024-01-12</text>
<text x="740.3" y="1060.5" text-anchor="middle" font-size="12" fill="#6e7079" font-family="Liberation Sans" dominant-baseline="central">2024-01-13</text>
<text x="960.0" y="1060.5" text-anchor="middle" font-size="12" fill="#6e7079" font-family="Liberation Sans" dominant-baseline="central">2024-01-14</text>
<text x="1179.7" y="1060.5" text-anchor="middle" font-size="12" fill="#6e7079" font-family="Liberation Sans" dominant-baseline="central">2024-01-15</text>
<text x="1399.3" y="1060.5" text-anchor="middle" font-size="12" fill="#6e7079" font-family="Liberation Sans" dominant-baseline="central">2024-01-16</text>
<text x="1619.0" y="1060.5" text-anchor="middle" font-size="12" fill="#6e7079" font-family="Liberation Sans" dominant-baseline="central">2024-01-17</text>
<path d="M301.00 1046.50 C301.00 1046.50 442.71 1046.50 520.67 1046.50 C662.38 1046.50 630.50 713.05 740.33 713.05 C850.17 713.05 818.29 1046.50 960.00 1046.50 C1037.96 1046.50 1084.24 1046.50 1179.67 1046.50 C1303.91 1046.50 1289.50 863.34 1399.33 863.34 C1509.17 863.34 1619.00 1046.50 1619.00 1046.50" stroke="#91cc75" stroke-width="2" fill="none" stroke-linejoin="bevel"/>
<circle cx="301.00" cy="1046.50" r="2" fill="#fff" stroke="#91cc75" stroke-width="2"/>
<circle cx="520.67" cy="1046.50" r="2" fill="#fff" stroke="#91cc75" stroke-width="2"/>
<circle cx="740.33" cy="713.05" r="2" fill="#fff" stroke="#91cc75" stroke-width="2"/>
<circle cx="960.00" cy="1046.50" r="2" fill="#fff" stroke="#91cc75" stroke-width="2"/>
<circle cx="1179.67" cy="1046.50" r="2" fill="#fff" stroke="#91cc75" stroke-width="2"/>
<circle cx="1399.33" cy="863.34" r="2" fill="#fff" stroke="#91cc75" stroke-width="2"/>
<circle cx="1619.00" cy="1046.50" r="2" fill="#fff" stroke="#91cc75" stroke-width="2"/>
<path d="M301.00 1046.50 C301.00 1046.50 410.83 1046.50 520.67 1046.50 C630.50 1046.50 630.50 1046.50 740.33 1046.50 C850.17 1046.50 850.17 1046.50 960.00 1046.50 C1069.83 1046.50 1069.83 1046.50 1179.67 1046.50 C1289.50 1046.50 1289.50 1046.50 1399.33 1046.50 C1509.17 1046.50 1619.00 1046.50 1619.00 1046.50" stroke="#fac858" stroke-width="2" fill="none" stroke-linejoin="bevel"/>
<circle cx="301.00" cy="1046.50" r="2" fill="#fff" stroke="#fac858" stroke-width="2"/>
<circle cx="520.67" cy="1046.50" r="2" fill="#fff" stroke="#fac858" stroke-width="2"/>
<circle cx="740.33" cy="1046.50" r="2" fill="#fff" stroke="#fac858" stroke-width="2"/>
<circle cx="960.00" cy="1046.50" r="2" fill="#fff" stroke="#fac858" stroke-width="2"/>
<circle cx="1179.67" cy="1046.50" r="2" fill="#fff" stroke="#fac858" stroke-width="2"/>
<circle cx="1399.33" cy="1046.50" r="2" fill="#fff" stroke="#fac858" stroke-width="2"/>
<circle cx="1619.00" cy="1046.50" r="2" fill="#fff" stroke="#fac858" stroke-width="2"/>
<path d="M301.00 1046.50 C301.00 1046.50 410.83 1046.50 520.67 1046.50 C630.50 1046.50 630.50 1046.50 740.33 1046.50 C850.17 1046.50 850.17 1046.50 960.00 1046.50 C1069.83 1046.50 1084.21 1046.50 1179.67 1046.50 C1303.87 1046.50 1289.50 863.65 1399.33 863.65 C1509.17 863.65 1619.00 1046.50 1619.00 1046.50" stroke="#ee6666" stroke-width="2" fill="none" stroke-linejoin="bevel"/>
<circle cx="301.00" cy="1046.50" r="2" fill="#fff" stroke="#ee6666" stroke-width="2"/>
<circle cx="520.67" cy="1046.50" r="2" fill="#fff" stroke="#ee6666" stroke-width="2"/>
<circle cx="740.33" cy="1046.50" r="2" fill="#fff" stroke="#ee6666" stroke-width="2"/>
<circle cx="960.00" cy="1046.50" r="2" fill="#fff" stroke="#ee6666" stroke-width="2"/>
<circle cx="1179.67" cy="1046.50" r="2" fill="#fff" stroke="#ee6666" stroke-width="2"/>
<circle cx="1399.33" cy="863.65" r="2" fill="#fff" stroke="#ee6666" stroke-width="2"/>
<circle cx="1619.00" cy="1046.50" r="2" fill="#fff" stroke="#ee6666" stroke-width="2"/>
</svg></div>
<div class="a" style="left:1672px;top:290px;width:6px;height:800px;border-radius:3px;background:#d4d6d9"></div>
<div class="a" style="left:1640px;top:547px;width:45px;height:40px;border-radius:6px 0 0 6px;background:#409eff"></div>
<svg class="a" style="left:1651px;top:557px" width="18" height="18" viewBox="0 0 18 18"><circle cx="9" cy="9" r="2.6" stroke="#fff" stroke-width="1.3" fill="none"/><path d="M9 1.5 L10.6 3 L12.8 2.6 L13.4 4.7 L15.5 5.5 L15 7.6 L16.5 9 L15 10.4 L15.5 12.5 L13.4 13.3 L12.8 15.4 L10.6 15 L9 16.5 L7.4 15 L5.2 15.4 L4.6 13.3 L2.5 12.5 L3 10.4 L1.5 9 L3 7.6 L2.5 5.5 L4.6 4.7 L5.2 2.6 L7.4 3 Z" stroke="#fff" stroke-width="1.3" fill="none" stroke-linejoin="round"/></svg>
<!--/CONTENT-->
<div id="header" class="a"></div>
<div id="tags" class="a"></div>
<!--HEADER-->
<div id="hdrborder" class="a" style="left:199px;top:115px;width:1px;height:85px;background:#e8eaee"></div>
<svg class="a" style="left:211px;top:133px" width="16" height="14" viewBox="0 0 16 14"><path d="M1 2 H15 M6 7 H15 M1 12 H15" stroke="#1a1a1a" stroke-width="2.2"/><path d="M1 7 L4.5 4.5 V9.5 Z" fill="#1a1a1a"/></svg>
<svg class="a" style="left:248px;top:134px" width="13" height="13" viewBox="0 0 13 13"><path d="M1.5 0.5 H11.5 L12.7 5.5 Q12.7 7 11.3 7 H1.7 Q0.3 7 0.3 5.5 Z" fill="#303133"/><path d="M2 7.5 V12 H11 V7.5 H9.5 V10.3 H3.5 V7.5 Z" fill="#303133"/></svg>
<div class="t" style="left:266px;top:130px;font-size:14px;line-height:20px;color:#1d1e20;font-weight:500;-webkit-text-stroke:0.1px #1d1e20">商城系统</div>
<svg class="a" style="left:330px;top:133px" width="9" height="15" viewBox="0 0 9 15"><path d="M7.6 1 L1.6 13.3" stroke="#b0b3b8" stroke-width="1.3"/></svg>
<svg class="a" style="left:346px;top:133px" width="15" height="15" viewBox="0 0 14 14"><path d="M0.5 1 H13.5 M1.5 1 V9.5 H12.5 V1 M4 13.3 L5.5 9.5 M10 13.3 L8.5 9.5 M3.8 7 L6 4.5 L7.5 6 L10.3 3.3" stroke="#303133" stroke-width="1.2" fill="none"/></svg>
<div class="t" style="left:365px;top:130px;font-size:14px;line-height:20px;color:#1d1e20;font-weight:500;-webkit-text-stroke:0.1px #1d1e20">统计中心</div>
<svg class="a" style="left:430px;top:133px" width="9" height="15" viewBox="0 0 9 15"><path d="M7.6 1 L1.6 13.3" stroke="#b0b3b8" stroke-width="1.3"/></svg>
<svg class="a" style="left:444px;top:134px" width="17" height="13" viewBox="0 0 16 13"><rect x="0" y="0.5" width="16" height="12" rx="1.5" fill="#606266"/><rect x="0" y="3.5" width="16" height="2" fill="#fff"/><rect x="2.5" y="8" width="3" height="1.6" fill="#fff"/><rect x="6.5" y="8" width="2.5" height="1.6" fill="#fff"/></svg>
<div class="t" style="left:464px;top:130px;font-size:14px;line-height:20px;color:#606266">交易统计</div>
<!-- right tools -->
<svg class="a" style="left:1382.5px;top:133px" width="14.6" height="14.6" viewBox="0 0 16 16"><path d="M1.8 5.3 V1.8 H5.3 M10.7 1.8 H14.2 V5.3 M14.2 10.7 V14.2 H10.7 M5.3 14.2 H1.8 V10.7" stroke="#1a1a1a" stroke-width="2" fill="none"/></svg>
<svg class="a" style="left:1419px;top:132px" width="16" height="16" viewBox="0 0 16 16"><circle cx="7.3" cy="7.5" r="6.3" stroke="#1a1a1a" stroke-width="1.5" fill="none"/><path d="M11.8 12 L14.3 14.5" stroke="#1a1a1a" stroke-width="1.6"/></svg>
<svg class="a" style="left:1456px;top:132px" width="16" height="16" viewBox="0 0 16 16"><path d="M0.5 3.5 H9.5 M5 3.5 V14.5 M8 7.5 H15 M11.5 7.5 V14.5" stroke="#3a3a3a" stroke-width="2.3" fill="none"/></svg>
<svg class="a" style="left:1493px;top:131px" width="18" height="18" viewBox="0 0 18 18"><path d="M1 4 H10 M5.5 1.5 V4 M2.5 4 Q4 9 9.5 11 M8.5 4 Q7 9 1.5 11.5" stroke="#1a1a1a" stroke-width="1.3" fill="none"/><path d="M9 17 L12.5 8 L16.5 17 M10.3 14 H15" stroke="#1a1a1a" stroke-width="1.6" fill="none"/></svg>
<svg class="a" style="left:1531px;top:129px" width="18" height="18" viewBox="0 0 18 18"><path d="M3 13.5 V8 A6 6 0 0 1 15 8 V13.5 Z M1.5 13.5 H16.5" stroke="#1a1a1a" stroke-width="1.5" fill="none" stroke-linejoin="round"/><circle cx="9" cy="1.8" r="1.2" fill="#1a1a1a"/><circle cx="9" cy="15.6" r="1" fill="#1a1a1a"/></svg>
<svg class="a" style="left:1569px;top:120.5px" width="40" height="40" viewBox="0 0 40 40"><defs><clipPath id="avc"><circle cx="20" cy="20" r="20"/></clipPath></defs><g clip-path="url(#avc)"><rect width="40" height="40" fill="#4a8fd8"/><rect width="40" height="6" fill="#050a14"/><rect y="6" width="40" height="5" fill="#4b95df"/><text x="6" y="21" font-size="7" fill="#1a2a66" font-family="Liberation Sans" font-weight="bold">文 也</text><path d="M0 22 Q10 21 20 24 T40 23 V30 H0 Z" fill="#1f5fc0"/><path d="M0 25 Q12 26 22 28 T40 27 V33 H0Z" fill="#3b82e0"/><path d="M0 29 L3 28 L5 30 L8 27 L10 29 L13 28 L15 30 L18 27 L20 21 L21 27 L24 29 L27 27 L29 29 L32 28 L35 30 L38 27 L40 28 V40 H0 Z" fill="#02040a"/></g></svg>
<div class="t" style="left:1614px;top:130px;font-size:14px;line-height:20px;color:#606266">芋道源码</div>
<!-- tags view -->
<div class="a" style="left:235px;top:166px;width:1px;height:33px;background:#dcdfe6"></div>
<svg class="a" style="left:210px;top:175px" width="14" height="14" viewBox="0 0 14 14"><path d="M7 2 L2 7 L7 12 M12 2 L7 7 L12 12" stroke="#909399" stroke-width="1.1" fill="none"/></svg>
<div class="a" style="left:239px;top:167px;width:66px;height:31px;border:1px solid #d9d9d9;border-radius:3px;background:#fff"></div>
<div class="t" style="left:255px;top:174px;font-size:12px;line-height:16px;color:#606266">首页</div>
<div class="a" style="left:309px;top:167px;width:106px;height:31px;border:1px solid #d9d9d9;border-radius:3px;background:#fff"></div>
<svg class="a" style="left:322px;top:176px" width="12" height="12" viewBox="0 0 16 16"><circle cx="8" cy="8" r="7.8" fill="#404040"/><path d="M6 12 V4.2 H8.8 Q11 4.2 11 6.4 Q11 8.6 8.8 8.6 H6" stroke="#fff" stroke-width="2" fill="none"/></svg>
<div class="t" style="left:341px;top:174px;font-size:12px;line-height:16px;color:#606266">商品统计</div>
<div class="a" style="left:420px;top:167px;width:107px;height:31px;border-radius:3px;background:#409eff"></div>
<svg class="a" style="left:432px;top:176px" width="13" height="11" viewBox="0 0 16 13"><rect x="0" y="0.5" width="16" height="12" rx="1.5" fill="#fff"/><rect x="0" y="3.5" width="16" height="2" fill="#409eff"/><rect x="2.5" y="8" width="3" height="1.6" fill="#409eff"/><rect x="6.5" y="8" width="2.5" height="1.6" fill="#409eff"/></svg>
<div class="t" style="left:452px;top:174px;font-size:12px;line-height:16px;color:#fff">交易统计</div>
<div class="a" style="left:1575px;top:166px;width:1px;height:33px;background:#dcdfe6"></div>
<div class="a" style="left:1610px;top:166px;width:1px;height:33px;background:#dcdfe6"></div>
<div class="a" style="left:1645px;top:166px;width:1px;height:33px;background:#dcdfe6"></div>
<svg class="a" style="left:1585px;top:175px" width="14" height="14" viewBox="0 0 14 14"><path d="M2 2 L7 7 L2 12 M7 2 L12 7 L7 12" stroke="#909399" stroke-width="1.1" fill="none"/></svg>
<svg class="a" style="left:1620px;top:175px" width="15" height="15" viewBox="0 0 15 15"><path d="M12.5 7.5 A5.3 5.3 0 1 1 10.8 3.4" stroke="#a8abb2" stroke-width="1.2" fill="none"/><path d="M9.5 1.5 L12.8 1.8 L12.5 5" stroke="#a8abb2" stroke-width="1.2" fill="none"/></svg>
<svg class="a" style="left:1655px;top:176px" width="14" height="14" viewBox="0 0 14 14"><rect x="0.5" y="0.5" width="5.5" height="5.5" rx="1" fill="#909399"/><rect x="8" y="0.5" width="5.5" height="5.5" rx="1" fill="#909399"/><rect x="0.5" y="8" width="5.5" height="5.5" rx="1" fill="#909399"/><rect x="8" y="8" width="5.5" height="5.5" rx="1" fill="#909399"/></svg>
<!--/HEADER-->

<!--OVERLAY-->
<div class="a" style="left:0;top:0;width:1px;height:1077px;background:rgba(160,170,180,0.35)"></div>
<svg class="a" style="left:0;top:0" width="12" height="12" viewBox="0 0 12 12"><path d="M0 0 H11 Q0 0 0 11 Z" fill="#000"/><path d="M0.5 11 Q0.5 0.5 11 0.5" stroke="rgba(170,170,170,0.5)" fill="none"/></svg>
<svg class="a" style="left:1667px;top:0" width="12" height="12" viewBox="0 0 12 12"><path d="M12 0 H1 Q12 0 12 11 Z" fill="#000"/><path d="M11.5 11 Q11.5 0.5 1 0.5" stroke="rgba(170,170,170,0.5)" fill="none"/></svg>
<svg class="a" style="left:0;top:1065px" width="12" height="12" viewBox="0 0 12 12"><path d="M0 12 H11 Q0 12 0 1 Z" fill="#000"/><path d="M0.5 1 Q0.5 11.5 11 11.5" stroke="rgba(150,160,170,0.5)" fill="none"/></svg>
<svg class="a" style="left:1667px;top:1065px" width="12" height="12" viewBox="0 0 12 12"><path d="M12 12 H1 Q12 12 12 1 Z" fill="#000"/></svg>
<!--/OVERLAY-->
</body></html>
